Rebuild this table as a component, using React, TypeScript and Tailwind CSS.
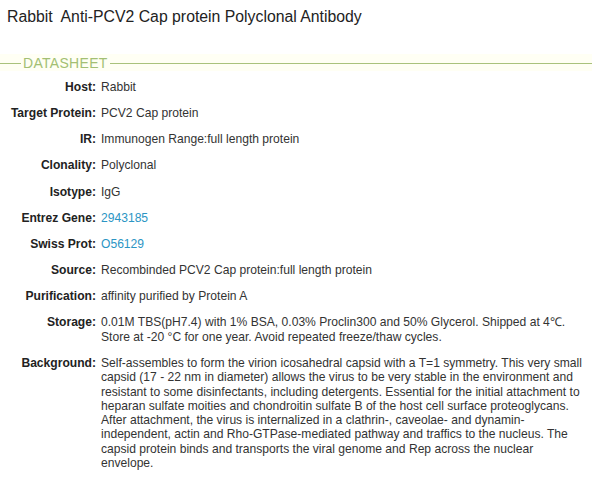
import React from 'react'

const rows: { label: string; lines: string[]; link?: boolean }[] = [
  { label: 'Host', lines: ['Rabbit'] },
  { label: 'Target Protein', lines: ['PCV2 Cap protein'] },
  { label: 'IR', lines: ['Immunogen Range:full length protein'] },
  { label: 'Clonality', lines: ['Polyclonal'] },
  { label: 'Isotype', lines: ['IgG'] },
  { label: 'Entrez Gene', lines: ['2943185'], link: true },
  { label: 'Swiss Prot', lines: ['O56129'], link: true },
  { label: 'Source', lines: ['Recombinded PCV2 Cap protein:full length protein'] },
  { label: 'Purification', lines: ['affinity purified by Protein A'] },
  {
    label: 'Storage',
    lines: [
      '0.01M TBS(pH7.4) with 1% BSA, 0.03% Proclin300 and 50% Glycerol. Shipped at 4℃.',
      'Store at -20 °C for one year. Avoid repeated freeze/thaw cycles.',
    ],
  },
  {
    label: 'Background',
    lines: [
      'Self-assembles to form the virion icosahedral capsid with a T=1 symmetry. This very small',
      'capsid (17 - 22 nm in diameter) allows the virus to be very stable in the environment and',
      'resistant to some disinfectants, including detergents. Essential for the initial attachment to',
      'heparan sulfate moities and chondroitin sulfate B of the host cell surface proteoglycans.',
      'After attachment, the virus is internalized in a clathrin-, caveolae- and dynamin-',
      'independent, actin and Rho-GTPase-mediated pathway and traffics to the nucleus. The',
      'capsid protein binds and transports the viral genome and Rep across the nuclear',
      'envelope.',
    ],
  },
]

export default function App() {
  return (
    <div className="h-[483px] w-[592px] overflow-hidden bg-white font-['Liberation_Sans',Arial,sans-serif] text-[#333]">
      <h1 className="px-[7px] pt-[6px] text-[15.8px] leading-[22px] text-[#222]">
        Rabbit{'\u00a0'} Anti-PCV2 Cap protein Polyclonal Antibody
      </h1>

      {/* datasheet heading */}
      <div className="mt-[26px] flex items-center bg-[#fffff4] pt-[1px]">
        <div className="h-px w-[21px] bg-[#a9c27c]" />
        <span className="px-[2px] text-[14px] leading-[16px] tracking-[0.3px] text-[#a3bf73]">DATASHEET</span>
        <div className="h-px flex-1 bg-[#a9c27c]" />
      </div>

      <div className="mt-[3px]">
        {rows.map((r) => (
          <div key={r.label} className="flex py-[5.95px] text-[12.1px] leading-[14.3px]">
            <div className="w-[101px] shrink-0 pr-[5px] text-right font-bold text-[#222]">{r.label}:</div>
            <div className={`flex flex-col whitespace-nowrap ${r.link ? 'text-[#2b95c4]' : ''}`}>
              {r.lines.map((l) => (
                <span key={l}>{l}</span>
              ))}
            </div>
          </div>
        ))}
      </div>
    </div>
  )
}
